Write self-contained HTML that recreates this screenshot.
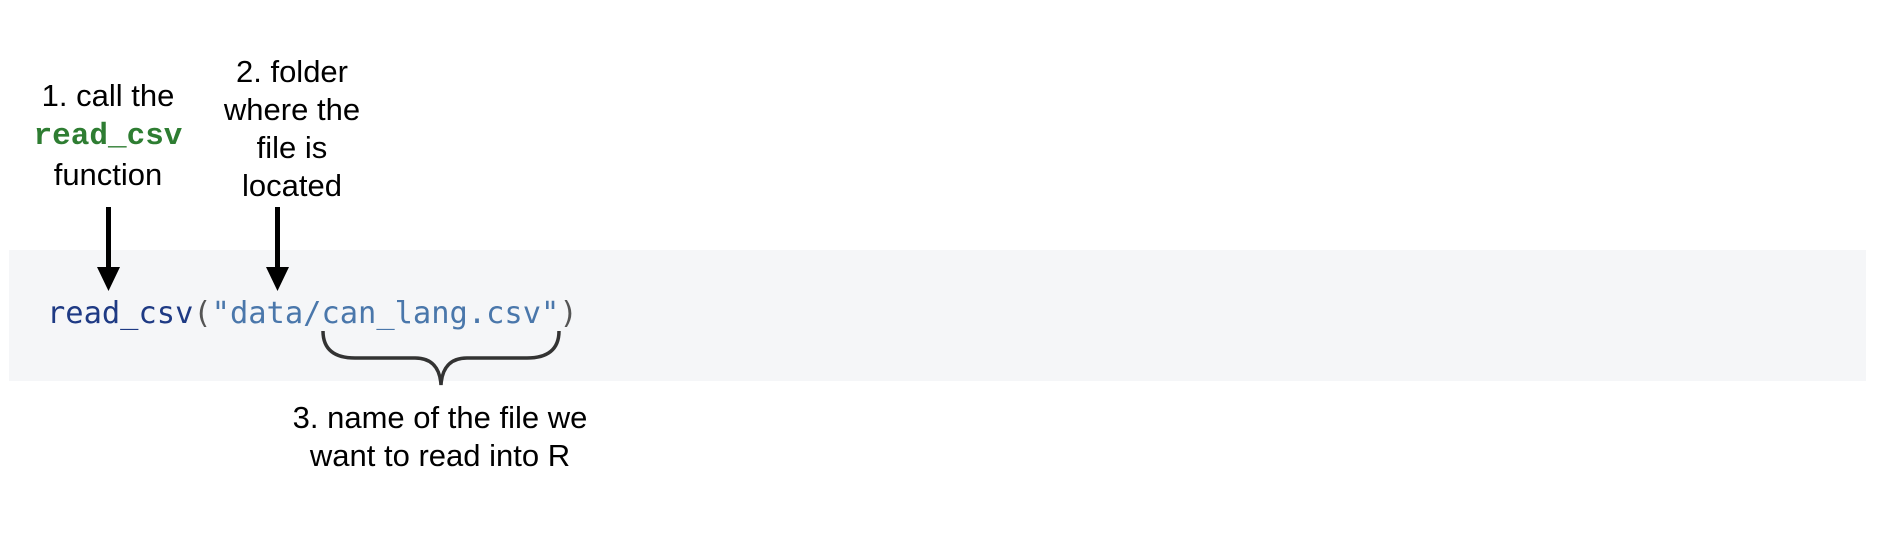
<!DOCTYPE html>
<html><head><meta charset="utf-8"><style>
html,body{margin:0;padding:0;background:#fff;width:1897px;height:545px;overflow:hidden;position:relative}
.band{position:absolute;left:9px;top:250px;width:1857px;height:131px;background:#f5f6f8}
.lbl{position:absolute;font-family:"Liberation Sans",sans-serif;font-size:31px;color:#000;text-align:center;line-height:38px;white-space:nowrap}
.code{position:absolute;left:47px;top:296px;font-family:"DejaVu Sans Mono",monospace;font-size:30.4px;line-height:36px;white-space:pre}
.g{font-family:"Liberation Mono",monospace;font-weight:bold;color:#2e7d32;font-size:31px}
</style></head><body>
<div class="band"></div>
<div class="lbl" style="left:8px;width:200px;top:77px">1. call the<br><span class="g">read_csv</span><br>function</div>
<div class="lbl" style="left:192px;width:200px;top:53px">2. folder<br>where the<br>file is<br>located</div>
<div class="code"><span style="color:#1e3a84">read_csv</span><span style="color:#555">(</span><span style="color:#4a77ab">"data/can_lang.csv"</span><span style="color:#555">)</span></div>
<svg width="1897" height="545" style="position:absolute;left:0;top:0">
<rect x="106" y="207" width="5" height="62" fill="#000"/>
<polygon points="97,267 120,267 108.5,291" fill="#000"/>
<rect x="275" y="207" width="5" height="62" fill="#000"/>
<polygon points="266,267 289,267 277.5,291" fill="#000"/>
<path d="M323,331 C323,350 335,358 355,358 L415,358 C432,358 440,368 441,385 C442,368 450,358 467,358 L527,358 C547,358 559,350 559,331" fill="none" stroke="#333" stroke-width="3.5"/>
</svg>
<div class="lbl" style="left:240px;width:400px;top:399px">3. name of the file we<br>want to read into R</div>
</body></html>
